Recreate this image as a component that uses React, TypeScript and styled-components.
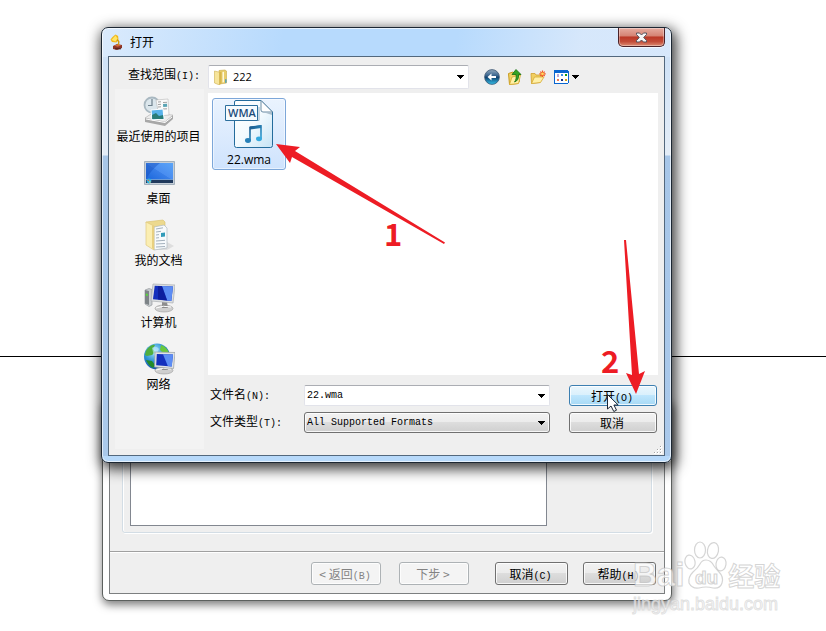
import React from "react";
import styled, { createGlobalStyle, css } from "styled-components";

const GlobalStyle = createGlobalStyle`
  *, *::before, *::after { box-sizing: border-box; }
  html, body { margin: 0; padding: 0; background: #fff; }
  body, button, input, select {
    font-family: "Noto Sans CJK SC", sans-serif;
    font-size: 12px;
    line-height: 16px;
    color: #000;
  }
  button, input, select { margin: 0; }
  svg { display: block; flex: none; }
`;

const Desktop = styled.main`
  position: relative;
  min-height: 100vh;
  overflow: hidden;
  background: #fff;
`;

const HorizonLine = styled.div`
  position: absolute;
  top: 356px;
  left: 0;
  right: 0;
  height: 1px;
  background: #000;
`;

/* Latin text set in a half-width companion face */
const Mono = styled.span`
  font-family: "Liberation Mono", monospace;
  font-size: 10px;
`;

/* ---------- wizard window ---------- */

const WizardWindow = styled.section`
  position: absolute;
  top: 400px;
  left: 102px;
  right: 154px;
  padding: 6px;
  border: 1px solid #5c605e;
  border-radius: 7px;
  background: #fff;
  box-shadow: 1px 3px 8px 1px rgba(0, 0, 0, 0.5);
`;

const WizardClient = styled.div`
  border: 1px solid #7c7f80;
  background: #efefef;
`;

const WizardGroup = styled.div`
  margin: 12px 12px 18px;
  padding: 7px 104px 6px 7px;
  border: 1px solid #d3dde5;
  border-radius: 3px;
  box-shadow: 1px 1px 0 #fff, inset 1px 0 0 #fff;
`;

const WizardList = styled.div`
  height: 98px;
  border: 1px solid #828790;
  background: #fff;
`;

const WizardFooter = styled.footer`
  display: flex;
  justify-content: flex-end;
  padding: 10px 8px 8px;
  border-top: 1px solid #a0a0a0;
  box-shadow: inset 0 1px 0 #fff;
`;

const PushButton = styled.button<{ $width: number; $gap?: number; $hot?: boolean; $tall?: boolean }>`
  width: ${(p) => p.$width}px;
  height: ${(p) => (p.$tall ? 23 : 21)}px;
  margin-left: ${(p) => p.$gap ?? 0}px;
  padding: 0 2px 0 0;
  display: flex;
  align-items: baseline;
  justify-content: center;
  line-height: ${(p) => (p.$tall ? 21 : 19)}px;
  border: 1px solid #707070;
  border-radius: 3px;
  background: linear-gradient(#f2f2f2, #ebebeb 49%, #dddddd 50%, #cfcfcf);
  box-shadow: inset 0 0 0 1px rgba(255, 255, 255, 0.8);
  white-space: pre;
  ${(p) =>
    p.$hot &&
    css`
      border-color: #3c7fb1;
      background: linear-gradient(#eaf6fd, #d9f0fc 49%, #bee6fd 50%, #a7d9f5);
    `}
  &:disabled {
    border-color: #adb2b5;
    background: #f4f4f4;
    color: #838383;
  }
`;

/* ---------- open dialog ---------- */

const DialogWindow = styled.section`
  position: absolute;
  top: 27px;
  left: 101px;
  right: 154px;
  padding: 0 6px 6px;
  border: 1px solid #1c2733;
  border-radius: 7px;
  background:
    linear-gradient(100deg, rgba(222, 236, 252, 0.9), rgba(184, 218, 253, 0) 32%, rgba(184, 218, 253, 0) 62%, rgba(218, 233, 251, 0.9) 84%) top / 100% 29px no-repeat,
    linear-gradient(#b7dafd, #b7dafd) top / 100% 29px no-repeat,
    linear-gradient(#b7d9fa, #b7d9fa) bottom / 100% 6px no-repeat,
    linear-gradient(#cfe2f7 30px, #e4edf7 127px, #a7c6e8 128px, #aac9eb);
  box-shadow:
    inset 0 0 0 1px rgba(255, 255, 255, 0.65),
    2px 4px 14px 2px rgba(0, 0, 0, 0.78);
`;

const TitleBar = styled.header`
  display: flex;
  align-items: flex-start;
  justify-content: space-between;
  height: 28px;
`;

const Title = styled.h1`
  display: flex;
  align-items: center;
  gap: 4px;
  height: 28px;
  margin: 0;
  padding-left: 2px;
  font-size: 12px;
  font-weight: 400;
`;

const CloseButton = styled.button`
  display: flex;
  align-items: center;
  justify-content: center;
  width: 47px;
  height: 19px;
  padding: 0;
  border: 1px solid #4a2228;
  border-top: 0;
  border-radius: 0 0 5px 5px;
  background: linear-gradient(#e6aca0, #d58373 44%, #bb3826 50%, #c24c38 75%, #dc8b72);
  box-shadow: inset 0 0 0 1px rgba(255, 255, 255, 0.35), 0 1px 0 rgba(255, 255, 255, 0.7);
`;

const DialogClient = styled.div`
  position: relative;
  border: 1px solid #53687d;
  background: #efefef;
`;

const LookInRow = styled.div`
  display: flex;
  align-items: center;
  padding: 8px 85px 0 19px;
`;

const LookInLabel = styled.label`
  width: 80px;
  padding-bottom: 4px;
`;

const Combo = styled.div<{ $tall?: boolean; $raised?: boolean }>`
  flex: 1;
  min-width: 0;
  display: flex;
  align-items: center;
  height: ${(p) => (p.$tall ? 24 : 21)}px;
  padding: 0 4px 0 ${(p) => (p.$tall ? 4 : 2)}px;
  border: 1px solid #e2e3ea;
  border-top-color: #abadb3;
  border-radius: 2px;
  background: #fff;
  ${(p) =>
    p.$raised &&
    css`
      border-color: #707070;
      border-radius: 3px;
      background: linear-gradient(#f2f2f2, #ebebeb 49%, #dddddd 50%, #cfcfcf);
      box-shadow: inset 0 0 0 1px rgba(255, 255, 255, 0.8);
    `}
`;

const fieldReset = css`
  flex: 1;
  min-width: 0;
  height: 18px;
  padding: 0;
  border: 0;
  outline: 0;
  background: transparent;
  appearance: none;
`;

const ComboSelect = styled.select<{ $mono?: boolean }>`
  ${fieldReset}
  font-family: ${(p) => (p.$mono ? '"Liberation Mono", monospace' : '"Open Sans", sans-serif')};
  font-size: ${(p) => (p.$mono ? 10 : 11)}px;
  padding-left: ${(p) => (p.$mono ? 0 : 4)}px;
`;

const ComboInput = styled.input`
  ${fieldReset}
  font-family: "Liberation Mono", monospace;
  font-size: 10px;
`;

const ToolGroup = styled.div`
  display: flex;
  gap: 7px;
  margin-left: 15px;
`;

const ToolButton = styled.button`
  display: flex;
  align-items: center;
  gap: 3px;
  height: 18px;
  padding: 0;
  border: 0;
  background: none;
`;

const DialogBody = styled.div`
  display: flex;
  gap: 4px;
  padding: 0 6px 6px;
`;

const PlacesBar = styled.nav`
  width: 89px;
  height: 360px;
  padding: 6px 2px 0 0;
  background: #f3f3f3;
`;

const PlaceButton = styled.button`
  display: flex;
  flex-direction: column;
  align-items: center;
  gap: 1px;
  width: 100%;
  height: 62px;
  padding: 0;
  border: 0;
  background: none;
  white-space: nowrap;
`;

const Content = styled.div`
  flex: 1;
  min-width: 0;
  padding-top: 4px;
`;

const FileList = styled.div`
  height: 282px;
  padding: 5px 4px;
  background: #fff;
`;

const FileItem = styled.button`
  display: flex;
  flex-direction: column;
  align-items: center;
  gap: 4px;
  width: 74px;
  height: 72px;
  padding: 1px 0 0;
  border: 1px solid #7da7d9;
  border-radius: 3px;
  background: linear-gradient(#eaf3fe, #cfe3fd);
  box-shadow: inset 0 0 0 1px rgba(255, 255, 255, 0.5);
  font-family: "Open Sans", sans-serif;
`;

const Fields = styled.form`
  display: grid;
  grid-template-columns: 94px 1fr 88px;
  row-gap: 6px;
  align-items: center;
  margin: 10px 1px 0 2px;
`;

const FieldCell = styled.div`
  display: flex;
  margin-right: 19px;
`;

const ResizeGrip = styled.svg`
  position: absolute;
  right: 1px;
  bottom: 0;
`;

/* ---------- overlays ---------- */

const Annotations = styled.svg`
  position: absolute;
  top: 0;
  left: 0;
  pointer-events: none;
`;

const StepNumber = styled.span<{ $x: number; $y: number }>`
  position: absolute;
  left: ${(p) => p.$x}px;
  top: ${(p) => p.$y}px;
  font-size: 31px;
  line-height: 32px;
  font-weight: 700;
  color: #ed1c24;
`;

const Watermark = styled.div`
  position: absolute;
  top: 540px;
  right: 44px;
  width: 149px;
  color: rgba(255, 255, 255, 0.7);
  -webkit-text-stroke: 1px rgba(185, 185, 185, 0.6);
  font-family: "Liberation Sans", "Noto Sans CJK SC", sans-serif;
  white-space: nowrap;
  pointer-events: none;
`;

const WatermarkBrand = styled.div`
  display: flex;
  align-items: flex-end;
  height: 52px;
  font-size: 33px;
  line-height: 34px;
  font-weight: 700;
`;

const WatermarkCn = styled.span`
  font-family: "Noto Sans CJK SC", sans-serif;
  font-size: 26px;
`;

const WatermarkSite = styled.div`
  font-size: 18px;
  line-height: 24px;
  -webkit-text-stroke: 1px rgba(205, 205, 205, 0.6);
`;

/* ---------- icons ---------- */

const DownArrow = () => (
  <svg width="7" height="4" viewBox="0 0 7 4" aria-hidden="true" shapeRendering="crispEdges">
    <path d="M0 0h7v1H6v1H5v1H4v1H3V3H2V2H1V1H0z" fill="#000" />
  </svg>
);

const GramophoneIcon = () => (
  <svg width="16" height="16" viewBox="0 0 16 16" aria-hidden="true">
    <path d="M3 12l4-2 5 1v3l-5 2-4-1z" fill="#8c3426" />
    <path d="M4 11.600l3.500-1 4 1-4 1.200z" fill="#d5663c" />
    <path d="M5.500.500l2.600 1.500L8.500 5.500l-2 3L2 8 .5 5.500 2.500 3z" fill="#f0b81c" />
    <path d="M1.500 6l4-4.500 2 3-2 3z" fill="#ffe566" />
    <path d="M7 6q3 1 1 5" fill="none" stroke="#d09a10" strokeWidth="1.500" />
    <path d="M5 14.800h6" stroke="#4b1d18" />
  </svg>
);

const CloseGlyph = () => (
  <svg width="13" height="11" viewBox="0 0 13 11" aria-hidden="true">
    <path
      d="M1.500 1h3L6.500 3l2-2h3v1.500L8.700 5.500l2.800 3V10h-3l-2-2-2 2h-3V8.500l2.800-3-2.800-3z"
      fill="#f6f6f6"
      stroke="#54545e"
      strokeWidth="1"
    />
  </svg>
);

const FolderSmallIcon = () => (
  <svg width="16" height="16" viewBox="0 0 16 16" aria-hidden="true">
    <path d="M6 1.500l6-.5 1.500 1v12l-7 1z" fill="#e9ce6c" stroke="#c9a94a" strokeWidth=".6" />
    <path d="M9.500 3l1.500-.2v10.400l-1.500.4z" fill="#fff8dc" />
    <path d="M1.500 2l5 1.200V16L1.500 14z" fill="#f7e59b" stroke="#cfb050" strokeWidth=".6" />
    <path d="M6.500 3.200L8.500 2.500v12L6.500 16z" fill="#d8b54c" />
    <path d="M12.200 10l1.300.5v3l-1.300.5z" fill="#3a9ac8" />
  </svg>
);

const BackIcon = () => (
  <svg width="16" height="16" viewBox="0 0 16 16" aria-hidden="true">
    <defs>
      <linearGradient id="back" x1="0" y1="0" x2="0" y2="1">
        <stop offset="0" stopColor="#93a9bd" />
        <stop offset=".45" stopColor="#2f5c88" />
        <stop offset=".5" stopColor="#0e3b68" />
        <stop offset="1" stopColor="#35c3ee" />
      </linearGradient>
    </defs>
    <circle cx="8" cy="8" r="7.400" fill="url(#back)" stroke="#3d5873" strokeWidth=".8" />
    <path d="M3.500 8l4-3.500v2.500H12v2H7.500v2.500z" fill="#fff" />
  </svg>
);

const UpIcon = () => (
  <svg width="16" height="16" viewBox="0 0 16 16" aria-hidden="true">
    <path d="M1.500 4.500L6 3l1 1.500h5.500V12L11 14.500 2.500 15.500z" fill="#f0d264" stroke="#c99a1e" />
    <path d="M2.500 15.500L5 8l8.500-2-2 8.500z" fill="#fff0a4" stroke="#d5ab35" strokeWidth=".8" />
    <path d="M9 .5l5 5h-2.500c.5 4-1 6.500-4 7.500 1.500-2 2-4 1.500-7.500H5z" fill="#35a324" stroke="#176d10" strokeWidth=".8" />
  </svg>
);

const NewFolderIcon = () => (
  <svg width="16" height="16" viewBox="0 0 16 16" aria-hidden="true">
    <path d="M1 4.500h4l1 1.500h6v3L10 13.500 1.500 14.500z" fill="#f1cf61" stroke="#d0a030" strokeWidth=".8" />
    <path d="M1.500 14.500L4.500 8H14l-3.500 5.500z" fill="#fff0a8" stroke="#d5ab35" strokeWidth=".8" />
    <path d="M12.500 1.500v6.500M9.300 4.800h6.400M10.300 2.600l4.400 4.400M14.700 2.600l-4.400 4.400" stroke="#f15a24" strokeWidth="1.200" />
    <circle cx="12.500" cy="4.800" r="1.400" fill="#ffd95c" />
  </svg>
);

const ViewIcon = () => (
  <svg width="16" height="14" viewBox="0 0 16 14" aria-hidden="true" shapeRendering="crispEdges">
    <path d="M1 0h14v14H1z" fill="#0a66d0" />
    <path d="M1 1h15v12H1z" fill="#0a66d0" />
    <path d="M2 3h13v10H2z" fill="#fff" />
    <path d="M4 4h2v3H4z" fill="#b8a8d8" />
    <path d="M8 4h2v2H8z" fill="#3b8de8" />
    <path d="M12 4h2v2h-2z" fill="#119a11" />
    <path d="M4 9h2v2H4z" fill="#f07850" />
    <path d="M8 9h2v2H8z" fill="#10308c" />
    <path d="M12 9h2v2h-2z" fill="#d8a010" />
  </svg>
);

const RecentIcon = () => (
  <svg width="32" height="32" viewBox="0 0 32 32" aria-hidden="true">
    <path d="M2 23l6-4 22 1v4l-8 7L2 27z" fill="#a8a8a8" />
    <path d="M2 23l6-4 22 1-8 7z" fill="#ececec" stroke="#b0b0b0" strokeWidth=".5" />
    <circle cx="9" cy="10" r="7.500" fill="#dbe6ec" stroke="#a9b8c1" strokeWidth="1.800" />
    <path d="M9 4v6.500H5" fill="none" stroke="#6e808c" strokeWidth="1.200" />
    <path d="M13 5l12-1 1 16-10 1z" fill="#fafafa" stroke="#b8b8b8" strokeWidth=".6" />
    <path d="M15 7l3-.2M15 9.500l3-.2M15 12l3-.2M20 7.500l4-.2M20 14l4-.2" stroke="#a2a2a2" />
    <path d="M20 9l4-.3.200 3-4 .3z" fill="#5aa4b4" />
    <path d="M8 15l12-1 1 10-12 1z" fill="#58b2ea" stroke="#fff" />
    <path d="M9 20l4-2 3 3 4-1 .5 4L9.200 24z" fill="#2a7d79" />
    <path d="M3 24l19 3.500L29 22" fill="none" stroke="#fff" />
  </svg>
);

const DesktopIcon = () => (
  <svg width="32" height="32" viewBox="0 0 32 32" aria-hidden="true">
    <defs>
      <linearGradient id="desk" x1="0" y1="1" x2="1" y2="0">
        <stop offset="0" stopColor="#1a66dc" />
        <stop offset=".48" stopColor="#397fe8" />
        <stop offset=".5" stopColor="#4a8df0" />
        <stop offset="1" stopColor="#5aa4f8" />
      </linearGradient>
    </defs>
    <path d="M1.500 4.500h30v23h-30z" fill="#c5ced7" stroke="#a3b0bc" />
    <path d="M3 6h27v17H3z" fill="url(#desk)" />
    <path d="M3 6h14Q9 12 3 22z" fill="#174fbd" opacity=".45" />
    <path d="M3 23h27v3H3z" fill="#20395c" />
    <path d="M3 22h27v1H3z" fill="#6d9bd5" />
    <circle cx="6" cy="24" r="2.400" fill="#2db3e5" />
    <path d="M4.700 22.800h1.300v1.300H4.700z" fill="#f2683a" />
    <path d="M6.200 24.300h1.300v1.200H6.200z" fill="#fbd546" />
  </svg>
);

const DocumentsIcon = () => (
  <svg width="32" height="32" viewBox="0 0 32 32" aria-hidden="true">
    <path d="M9 31h15l7-4-7-4z" fill="#dedede" />
    <path d="M3 3l17-2 2 2v24l-11 3z" fill="#ecd98e" stroke="#d8c069" strokeWidth=".6" />
    <path d="M11 8l10-2 3 3v20l-13 2z" fill="#f7fafc" stroke="#b0bac1" strokeWidth=".7" />
    <path d="M13 10l7-1.200M13 13l5-.7M13 22l9-.7M13 25l9-.5M13 28l9-.5M13 19l3-.3M13 16l3-.4" stroke="#a5b2bd" />
    <path d="M18 14l4-.5v4l-4 .5z" fill="#319bb9" />
    <path d="M3 3l8 4v24l-8-5z" fill="#fbeeb2" stroke="#dfc97e" strokeWidth=".7" />
    <path d="M9 6l2 1v24l-2-2z" fill="#e8d080" />
  </svg>
);

const ScreenBlock = () => (
  <>
    <ellipse cx="21" cy="27.500" rx="9" ry="3.500" fill="#cfcfcf" stroke="#9b9b9b" strokeWidth=".6" />
    <path d="M19 21h5l1 6h-6z" fill="#8d8d8d" />
    <path d="M13 27q7-3 15-1" fill="none" stroke="#fff" />
  </>
);

const ComputerIcon = () => (
  <svg width="32" height="32" viewBox="0 0 32 32" aria-hidden="true">
    <path d="M2 9l4-1.500 3 1V24l-3 1.500L2 23z" fill="#c9cdd0" stroke="#959a9e" strokeWidth=".7" />
    <path d="M2 9l4 1v14l-4-1.500z" fill="#7d8387" />
    <path d="M2.800 12.500l2 .4v2l-2-.5z" fill="#55dd35" />
    <ScreenBlock />
    <path d="M10 3l22 1-2 18-22-2z" fill="#dcdfe1" stroke="#a9aeb2" strokeWidth=".7" />
    <path d="M11.700 4.800l18.300.8-1.700 14.400-18.300-1.700z" fill="#1430bd" />
    <path d="M19 5l11 .6-1.700 14.400-4-.5z" fill="#5c8df4" />
    <path d="M15 5l4 .2 5 14.300-9-1z" fill="#0a1792" opacity=".7" />
  </svg>
);

const NetworkIcon = () => (
  <svg width="32" height="32" viewBox="0 0 32 32" aria-hidden="true">
    <defs>
      <radialGradient id="globe" cx=".4" cy=".3" r=".8">
        <stop offset="0" stopColor="#a6e5ff" />
        <stop offset=".5" stopColor="#2b91d2" />
        <stop offset="1" stopColor="#123e9b" />
      </radialGradient>
    </defs>
    <circle cx="14" cy="13.500" r="13" fill="url(#globe)" />
    <path d="M5 5q4-4 7-3l-2 4 2 3-3 3-5 1-2-1q0-4 3-7z" fill="#4fae3d" />
    <path d="M18 2q6 2 8 8l-5 1-4-4z" fill="#69c83c" />
    <path d="M3 17l6 1 3 4-2 3q-5-3-7-8z" fill="#238b29" />
    <path d="M9 5q4-3 7 1-2 5-5 7" fill="#c4efff" opacity=".6" />
    <ScreenBlock />
    <path d="M12 9l20 .5-1.500 16-19-1.500z" fill="#e0e3e5" stroke="#989da1" strokeWidth=".7" />
    <path d="M13.800 11l16.200.4-1.300 12-15.500-1.200z" fill="#1430bd" />
    <path d="M20 11.200l10 .3-1.200 11.900-4-.4z" fill="#5c8df4" />
  </svg>
);

const WmaIcon = () => (
  <svg width="48" height="48" viewBox="0 0 48 48" aria-hidden="true">
    <defs>
      <linearGradient id="page" x1="0" y1="0" x2="1" y2="1">
        <stop offset="0" stopColor="#fff" />
        <stop offset=".5" stopColor="#f3fafe" />
        <stop offset="1" stopColor="#c5e3f5" />
      </linearGradient>
      <linearGradient id="note" gradientUnits="userSpaceOnUse" x1="20" y1="26" x2="38" y2="43">
        <stop offset="0" stopColor="#164a7c" />
        <stop offset="1" stopColor="#35b1e6" />
      </linearGradient>
    </defs>
    <path d="M9.500 2q0-1.500 1.500-1.500h25L47.500 12v33.500q0 2-2 2h-34q-2 0-2-2z" fill="url(#page)" stroke="#246c9c" />
    <path d="M36 .5V10q0 2 2 2h9.500z" fill="#fff" stroke="#6a8ca5" />
    <path d="M38 12h9v3z" fill="#a9bdcb" />
    <path d="M2 20.500h32V7" fill="none" stroke="#9ab4c6" />
    <path d="M.5 5.500h32v15H.5z" fill="#f6fbfe" stroke="#2c6f9d" />
    <text x="3" y="17" fontFamily="Open Sans, sans-serif" fontSize="11" fontWeight="600" fill="#1d4c7a">WMA</text>
    <path d="M25 40V27.500L36 26v12.500" fill="none" stroke="url(#note)" strokeWidth="1.600" />
    <path d="M25 28l11-1.500" fill="none" stroke="url(#note)" strokeWidth="3" />
    <ellipse cx="23" cy="40.500" rx="3" ry="2.400" fill="#2780b8" />
    <ellipse cx="34" cy="38.800" rx="3" ry="2.400" fill="#35a9de" />
  </svg>
);

const PawLogo = () => (
  <svg width="44" height="52" viewBox="0 0 44 52" aria-hidden="true">
    <g fill="rgba(255,255,255,.7)" stroke="rgba(185,185,185,.6)" strokeWidth="1.200">
      <ellipse cx="6" cy="22" rx="5" ry="7" transform="rotate(-12 6 22)" />
      <ellipse cx="16" cy="10" rx="5.500" ry="8" />
      <ellipse cx="29" cy="10.500" rx="5.500" ry="8" transform="rotate(10 29 10.500)" />
      <ellipse cx="37" cy="24" rx="5" ry="7" transform="rotate(8 37 24)" />
      <path d="M22 20q5 0 8 6 2 3 5 6 5 5 3 11-2 6-9 5-7-2-14 0-7 1-10-5-1-6 4-11 5-4 7-8 2-4 6-4z" />
      <text x="11" y="44" fontFamily="Liberation Sans, sans-serif" fontWeight="700" fontSize="19">du</text>
    </g>
  </svg>
);

const places = [
  { label: "最近使用的项目", Icon: RecentIcon },
  { label: "桌面", Icon: DesktopIcon },
  { label: "我的文档", Icon: DocumentsIcon },
  { label: "计算机", Icon: ComputerIcon },
  { label: "网络", Icon: NetworkIcon },
];

export default function App() {
  return (
    <>
      <GlobalStyle />
      <Desktop>
        <HorizonLine />

        <WizardWindow>
          <WizardClient>
            <WizardGroup>
              <WizardList />
            </WizardGroup>
            <WizardFooter>
              <PushButton $width={70} $tall disabled>&lt; 返回<Mono>(B)</Mono></PushButton>
              <PushButton $width={70} $gap={18} $tall disabled>下步 &gt;</PushButton>
              <PushButton $width={73} $gap={26} $tall>取消<Mono>(C)</Mono></PushButton>
              <PushButton $width={73} $gap={15} $tall>帮助<Mono>(H)</Mono></PushButton>
            </WizardFooter>
          </WizardClient>
        </WizardWindow>

        <DialogWindow role="dialog" aria-labelledby="dialog-title">
          <TitleBar>
            <Title id="dialog-title"><GramophoneIcon />打开</Title>
            <CloseButton aria-label="关闭"><CloseGlyph /></CloseButton>
          </TitleBar>
          <DialogClient>
            <LookInRow>
              <LookInLabel htmlFor="look-in">查找范围<Mono>(I):</Mono></LookInLabel>
              <Combo $tall>
                <FolderSmallIcon />
                <ComboSelect id="look-in" defaultValue="222"><option>222</option></ComboSelect>
                <DownArrow />
              </Combo>
              <ToolGroup>
                <ToolButton aria-label="后退"><BackIcon /></ToolButton>
                <ToolButton aria-label="向上一级"><UpIcon /></ToolButton>
                <ToolButton aria-label="新建文件夹"><NewFolderIcon /></ToolButton>
                <ToolButton aria-label="视图"><ViewIcon /><DownArrow /></ToolButton>
              </ToolGroup>
            </LookInRow>
            <DialogBody>
              <PlacesBar>
                {places.map(({ label, Icon }) => (
                  <PlaceButton key={label}><Icon />{label}</PlaceButton>
                ))}
              </PlacesBar>
              <Content>
                <FileList>
                  <FileItem><WmaIcon />22.wma</FileItem>
                </FileList>
                <Fields onSubmit={(e) => e.preventDefault()}>
                  <label htmlFor="file-name">文件名<Mono>(N):</Mono></label>
                  <FieldCell>
                    <Combo>
                      <ComboInput id="file-name" defaultValue="22.wma" />
                      <DownArrow />
                    </Combo>
                  </FieldCell>
                  <PushButton type="submit" $width={88} $hot>打开<Mono>(O)</Mono></PushButton>
                  <label htmlFor="file-type">文件类型<Mono>(T):</Mono></label>
                  <FieldCell>
                    <Combo $raised>
                      <ComboSelect id="file-type" $mono defaultValue="All Supported Formats">
                        <option>All Supported Formats</option>
                      </ComboSelect>
                      <DownArrow />
                    </Combo>
                  </FieldCell>
                  <PushButton type="button" $width={88}>取消</PushButton>
                </Fields>
              </Content>
            </DialogBody>
            <ResizeGrip width="10" height="10" viewBox="0 0 10 10" aria-hidden="true" shapeRendering="crispEdges">
              <path d="M7 1h2v2H7zM4 4h2v2H4zM7 4h2v2H7zM1 7h2v2H1zM4 7h2v2H4zM7 7h2v2H7z" fill="#fff" />
              <path d="M7 1h1v1H7zM4 4h1v1H4zM7 4h1v1H7zM1 7h1v1H1zM4 7h1v1H4zM7 7h1v1H7z" fill="#a6a6a6" />
            </ResizeGrip>
          </DialogClient>
        </DialogWindow>

        <Annotations width="700" height="430" viewBox="0 0 700 430" aria-hidden="true">
          <path d="M276 144l24 3-5 4 150 91.500-1 1.500-152-87-2 6z" fill="#ed1c24" />
          <path d="M624 240h2l13 134 6-3-9 23-10-21 6 2z" fill="#ed1c24" />
          <path d="M607.500 394.500v14.500l3.500-3 2.800 5.500 2.700-1.300-2.600-5.200h4.300z" fill="#fff" stroke="#1b2433" />
        </Annotations>
        <StepNumber $x={384} $y={217}>1</StepNumber>
        <StepNumber $x={601} $y={344}>2</StepNumber>

        <Watermark>
          <WatermarkBrand>
            Bai<PawLogo /><WatermarkCn>经验</WatermarkCn>
          </WatermarkBrand>
          <WatermarkSite>jingyan.baidu.com</WatermarkSite>
        </Watermark>
      </Desktop>
    </>
  );
}
